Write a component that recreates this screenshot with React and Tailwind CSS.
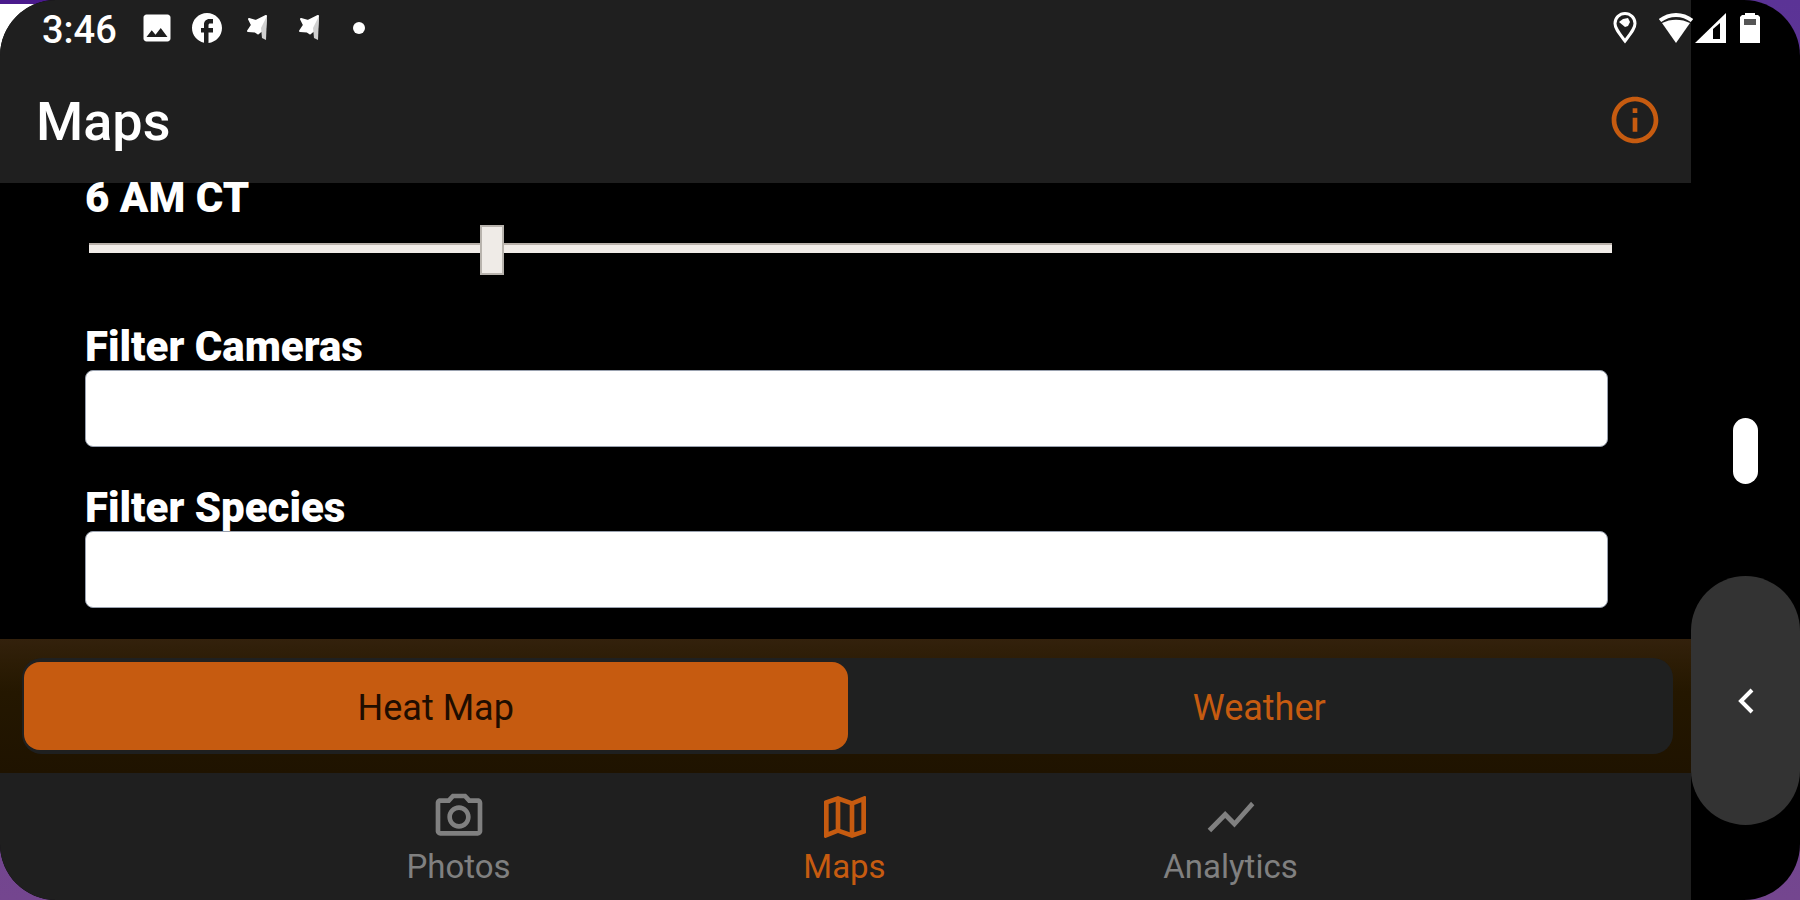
import React, { useState } from "react";
import {
  MdFacebook,
  MdImage,
  MdInfoOutline,
  MdOutlineMap,
  MdOutlinePhotoCamera,
  MdShowChart,
} from "react-icons/md";

const TABS = [
  { id: "photos", label: "Photos", Icon: MdOutlinePhotoCamera },
  { id: "maps", label: "Maps", Icon: MdOutlineMap },
  { id: "analytics", label: "Analytics", Icon: MdShowChart },
];

const MODES = ["Heat Map", "Weather"];

const hourLabel = (h) => `${h % 12 || 12} ${h < 12 ? "AM" : "PM"} CT`;

const FlagIcon = () => (
  <svg width="24" height="28" viewBox="0 0 24 28">
    <path
      d="M21 2 11 7 4 5l3 6-4 6 7 .5 3 2 3-2.500 4-2z"
      fill="#fff"
      stroke="#fff"
      strokeWidth="2"
      strokeLinejoin="round"
    />
    <path d="M16 14 22 2l-1 24-4-2z" fill="#d0d0d0" />
  </svg>
);

const PinIcon = () => (
  <svg width="26" height="34" viewBox="0 0 26 34" fill="none">
    <path
      d="M13 30C7 22 3 17.500 3 12.500a10 10 0 0 1 20 0C23 17.500 19 22 13 30z"
      stroke="currentColor"
      strokeWidth="3"
    />
    <path d="M7 11l6 5 3-1 2-4-2-4-5 1z" fill="currentColor" />
  </svg>
);

const WifiIcon = () => (
  <svg width="36" height="32" viewBox="0 0 36 32" fill="none">
    <path
      d="M2 8.500C11.500 1 24.500 1 34 8.500"
      stroke="currentColor"
      strokeWidth="4"
    />
    <path d="M4 11c8.500-4.500 19.500-4.500 28 0L18 31z" fill="currentColor" />
  </svg>
);

const SignalIcon = () => (
  <svg width="32" height="32" viewBox="0 0 32 32">
    <path d="M32 1v30H1z" fill="currentColor" />
    <path d="M19 17l7-6v16h-7z" fill="#000" />
  </svg>
);

const BatteryIcon = () => (
  <svg width="20" height="32" viewBox="0 0 20 32">
    <path d="M5 3V1h10v2h3l2 2v26H0V5l2-2z" fill="currentColor" />
    <path d="M4 7h12v6H4z" fill="#555" />
  </svg>
);

const StatusBar = () => (
  <div className="absolute inset-x-0 top-0 z-10 flex h-14 items-center justify-between pl-[42px] pr-10 text-white">
    <div className="flex items-center">
      <span className="pt-1 text-[38px] leading-10 font-medium">3:46</span>
      <div className="ml-[22px] flex items-center gap-3.5">
        <MdImage size={36} />
        <MdFacebook size={36} />
      </div>
      <div className="ml-5 flex items-center gap-7">
        <FlagIcon />
        <FlagIcon />
        <span className="ml-1 size-3 rounded-full bg-white" />
      </div>
    </div>
    <div className="flex items-center">
      <PinIcon />
      <div className="ml-5 flex items-center">
        <WifiIcon />
        <SignalIcon />
      </div>
      <div className="ml-3.5">
        <BatteryIcon />
      </div>
    </div>
  </div>
);

const FilterField = ({ id, label, value, onChange }) => (
  <div>
    <label
      htmlFor={id}
      className="block pb-0.5 text-[42px] leading-[42px] font-black text-white"
    >
      {label}
    </label>
    <input
      id={id}
      type="text"
      value={value}
      onChange={(e) => onChange(e.target.value)}
      className="block h-[77px] w-full rounded-lg border border-gray-400 bg-white px-4 text-4xl text-black outline-none"
    />
  </div>
);

const App = () => {
  const [hour, setHour] = useState(6);
  const [cameras, setCameras] = useState("");
  const [species, setSpecies] = useState("");
  const [mode, setMode] = useState("Heat Map");
  const [tab, setTab] = useState("maps");

  return (
    <div className="relative isolate min-h-screen bg-linear-to-b from-[#5b3396] to-[#74468f] font-[Roboto,sans-serif]">
      <div className="absolute top-0 left-0 -z-10 size-16 border-t-4 border-[#4a1a8c] bg-white" />

      <div className="relative flex min-h-screen overflow-hidden rounded-[56px] bg-black">
        <StatusBar />

        <div className="flex min-w-0 flex-1 flex-col">
          {/* Header */}
          <header className="flex h-[183px] items-center justify-between bg-[#1f1f1f] pt-14 pr-7 pl-9">
            <h1 className="pt-1 text-[54px] leading-16 font-medium text-white">
              Maps
            </h1>
            <button type="button" aria-label="Info" className="text-[#c65b10]">
              <MdInfoOutline size={56} />
            </button>
          </header>

          {/* Filters */}
          <main className="flex-1 pr-[83px] pl-[85px]">
            <div className="-mt-1.5">
              <label
                htmlFor="hour"
                className="block text-[42px] leading-[42px] font-black text-white"
              >
                {hourLabel(hour)}
              </label>
              <input
                id="hour"
                type="range"
                min="0"
                max="23"
                value={hour}
                onChange={(e) => setHour(Number(e.target.value))}
                className="mx-1 mt-1 block h-[50px] w-full appearance-none bg-transparent outline-none [&::-webkit-slider-runnable-track]:h-2.5 [&::-webkit-slider-runnable-track]:border-t-2 [&::-webkit-slider-runnable-track]:border-[#b8b0a9] [&::-webkit-slider-runnable-track]:bg-[#f1ece8] [&::-webkit-slider-thumb]:-mt-5 [&::-webkit-slider-thumb]:h-[50px] [&::-webkit-slider-thumb]:w-6 [&::-webkit-slider-thumb]:appearance-none [&::-webkit-slider-thumb]:border-2 [&::-webkit-slider-thumb]:border-[#b8b3ad] [&::-webkit-slider-thumb]:bg-[#efebe7]"
              />
            </div>
            <div className="mt-[53px] mb-[30px] space-y-10">
              <FilterField
                id="cameras"
                label="Filter Cameras"
                value={cameras}
                onChange={setCameras}
              />
              <FilterField
                id="species"
                label="Filter Species"
                value={species}
                onChange={setSpecies}
              />
            </div>
          </main>

          {/* Map mode */}
          <div className="bg-linear-to-b from-[#33210c] via-[#241700] via-40% to-[#1f1300] pt-[19px] pr-[18px] pb-[19px] pl-[22px]">
            <div className="flex rounded-[20px] bg-[#1f2020] px-0.5 py-1">
              {MODES.map((m) => (
                <button
                  key={m}
                  type="button"
                  onClick={() => setMode(m)}
                  className={`h-22 flex-1 rounded-2xl pt-1 text-4xl ${mode === m ? "bg-[#c65b10] text-[#1f0d00]" : "text-[#c65b10]"}`}
                >
                  {m}
                </button>
              ))}
            </div>
          </div>

          {/* Bottom tabs */}
          <nav className="flex justify-center bg-[#1f1f1f] pt-4 pr-0.5 pb-[15px]">
            {TABS.map(({ id, label, Icon }) => (
              <button
                key={id}
                type="button"
                onClick={() => setTab(id)}
                className={`flex w-[386px] flex-col items-center gap-1 text-[33px] leading-9 ${tab === id ? "text-[#c65b10]" : "text-[#808080]"}`}
              >
                <Icon size={56} />
                {label}
              </button>
            ))}
          </nav>
        </div>

        {/* System navigation */}
        <aside className="flex w-[109px] shrink-0 flex-col items-center justify-end pb-[75px]">
          <button
            type="button"
            aria-label="Home"
            className="h-[66px] w-[25px] rounded-full bg-white"
          />
          <button
            type="button"
            aria-label="Back"
            className="mt-23 flex h-[249px] w-full items-center justify-center rounded-full bg-[#333333] text-white"
          >
            <svg width="18" height="28" viewBox="0 0 18 28" fill="none">
              <path d="M15 3 4 14l11 11" stroke="currentColor" strokeWidth="4" />
            </svg>
          </button>
        </aside>
      </div>
    </div>
  );
};

export default App;
